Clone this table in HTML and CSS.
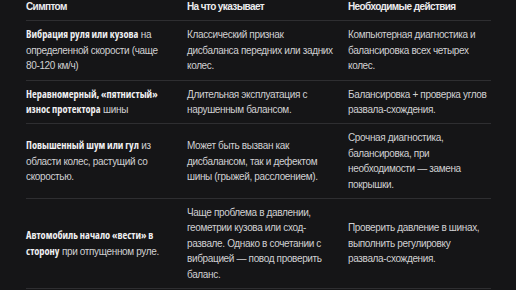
FILE: index.html
```html
<!DOCTYPE html>
<html lang="ru">
<head>
<meta charset="utf-8">
<link rel="stylesheet" href="styles.css">
</head>
<body>
<div class="wrap">
<table class="tbl">
<colgroup><col class="c1"><col class="c2"><col class="c3"></colgroup>
<thead>
<tr><th>Симптом</th><th>На что указывает</th><th>Необходимые действия</th></tr>
</thead>
<tbody>
<tr>
<td><b>Вибрация руля или кузова</b> на определенной скорости (чаще 80-120 км/ч)</td>
<td>Классический признак дисбаланса передних или задних колес.</td>
<td>Компьютерная диагностика и балансировка всех четырех колес.</td>
</tr>
<tr>
<td><b>Неравномерный, «пятнистый» износ протектора</b> шины</td>
<td>Длительная эксплуатация с нарушенным балансом.</td>
<td>Балансировка + проверка углов развала-схождения.</td>
</tr>
<tr>
<td><b>Повышенный шум или гул</b> из области колес, растущий со скоростью.</td>
<td>Может быть вызван как дисбалансом, так и дефектом шины (грыжей, расслоением).</td>
<td>Срочная диагностика, балансировка, при необходимости — замена покрышки.</td>
</tr>
<tr>
<td><b>Автомобиль начало «вести» в сторону</b> при отпущенном руле.</td>
<td>Чаще проблема в давлении, геометрии кузова или сход-развале. Однако в сочетании с вибрацией — повод проверить баланс.</td>
<td>Проверить давление в шинах, выполнить регулировку развала-схождения.</td>
</tr>
</tbody>
</table>
</div>
</body>
</html>
```
FILE: styles.css
```css
html, body {
  margin: 0;
  padding: 0;
  background: #151517;
}
body {
  font-family: "Liberation Sans", Arial, sans-serif;
  font-size: 10px;
  letter-spacing: -0.35px;
  line-height: 15.4px;
  color: #d0d0d2;
}
.wrap {
  padding: 0 25px 0 26px;
  margin-top: -7px;
}
.tbl {
  width: 465px;
  border-collapse: collapse;
  table-layout: fixed;
}
.c1, .c2 { width: 161px; }
.c3 { width: 143px; }
.tbl th {
  text-align: left;
  font-weight: 700;
  letter-spacing: -0.6px;
  color: #ececee;
  padding: 6px 14px 6px 0;
  border-bottom: 1px solid #2e2e31;
}
.tbl td {
  vertical-align: middle;
  padding: 6px 14px 6px 0;
  border-bottom: 1px solid #2e2e31;
}
.tbl th:last-child, .tbl td:last-child {
  padding-right: 0;
}
.tbl td b {
  font-family: "Open Sans", "Liberation Sans", sans-serif;
  font-size: 10.4px;
  font-weight: 700;
  font-stretch: 75%;
  letter-spacing: 0;
  line-height: 10px;
  color: #eeeef0;
}
```
